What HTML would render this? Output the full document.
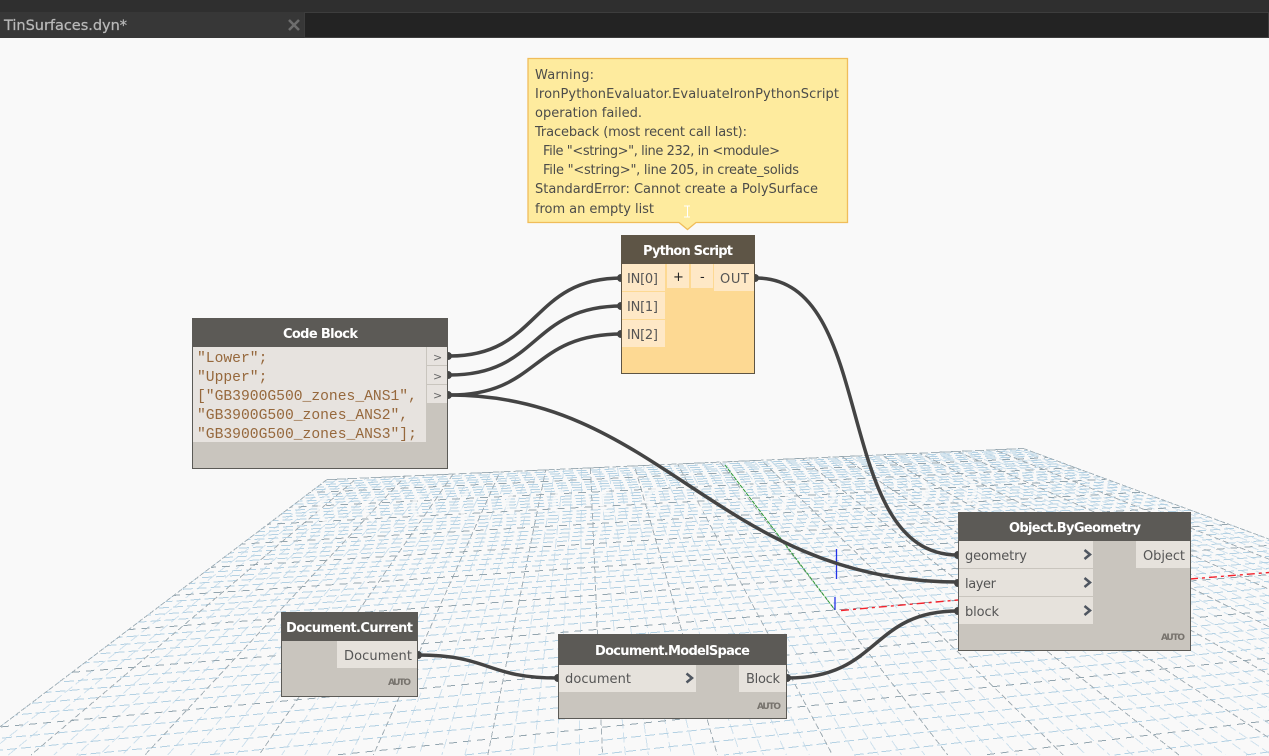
<!DOCTYPE html>
<html><head><meta charset="utf-8"><title>TinSurfaces.dyn</title>
<style>
html,body{margin:0;padding:0;width:1269px;height:756px;background:#f9f9f9;overflow:hidden}
svg{display:block;overflow:hidden}
text{font-family:"DejaVu Sans","Liberation Sans",sans-serif;font-size:13px;fill:#555}
.t{fill:#4c4c4a}
.h{font-weight:bold;fill:#fff;font-size:13px}
.a{font-weight:bold;font-size:9px;fill:#77736d}
.c{font-family:"Liberation Mono",monospace;font-size:14.67px;fill:#96683c}
</style></head><body>
<svg xmlns="http://www.w3.org/2000/svg" width="1269" height="756" viewBox="0 0 1269 756">
<rect x="0" y="38" width="1269" height="718" fill="#f9f9f9"/>
<g id="grid"></g>
<!-- axes -->
<path d="M725 465L835 610" stroke="#2f9a35" stroke-width="1" stroke-dasharray="4 1" fill="none"/>
<path d="M841 610.500L958 600M1190 579L1269 572.500" stroke="#f4222c" stroke-width="1.400" stroke-dasharray="8 4 3 4" fill="none"/>
<path d="M836.500 549V579M835 597V610" stroke="#2233e8" stroke-width="1.300" fill="none"/>
<!-- wires -->
<g fill="none" stroke="#444" stroke-width="3.500">
<path d="M450 356C540 356 530 278 622 278"/>
<path d="M450 375C540 375 530 306 622 306"/>
<path d="M450 395C540 395 530 334 622 334"/>
<path d="M756 278C880 278 830 555 958 555"/>
<path d="M450 395C660 395 720 582 958 582"/>
<path d="M418 655C490 655 486 678 558 678"/>
<path d="M788 678C880 678 870 611 958 611"/>
</g>
<!-- tab bar -->
<rect x="0" y="0" width="1269" height="12" fill="#2f2f2f"/>
<rect x="0" y="12" width="1269" height="26" fill="#373737"/>
<rect x="304.500" y="12.500" width="964" height="25" fill="#232323" stroke="#3d3d3d"/>
<text x="4" y="30" textLength="123" style="font-size:14.500px;fill:#b8b8b8;stroke:#b8b8b8;stroke-width:.25px">TinSurfaces.dyn*</text>
<path d="M289 20L299 30M299 20L289 30" stroke="#6e6e6e" stroke-width="2.600" fill="none"/>
<!-- tooltip -->
<path d="M528 58.500H847.500V222.500H696L687.500 229.500L679 222.500H528Z" fill="#feeb9e" stroke="#f0bd5a" stroke-width="1.300"/>
<g class="tip">
<text class="t" x="535" y="79" textLength="59">Warning:</text>
<text class="t" x="535" y="98" textLength="304">IronPythonEvaluator.EvaluateIronPythonScript</text>
<text class="t" x="535" y="117" textLength="107">operation failed.</text>
<text class="t" x="535" y="136" textLength="212">Traceback (most recent call last):</text>
<text class="t" x="543" y="155" textLength="237">File "&lt;string&gt;", line 232, in &lt;module&gt;</text>
<text class="t" x="543" y="174" textLength="256">File "&lt;string&gt;", line 205, in create_solids</text>
<text class="t" x="535" y="193" textLength="283">StandardError: Cannot create a PolySurface</text>
<text class="t" x="535" y="213" textLength="119">from an empty list</text>
</g>
<path d="M684 206H690M684 217H690M687.500 206V217" stroke="#fff" stroke-width="1" fill="none"/>
<!-- Python Script -->
<rect x="621.500" y="235.500" width="133" height="138" fill="#fdd993" stroke="#5e5544"/>
<rect x="621" y="235" width="134" height="29" fill="#5e5546"/>
<rect x="622" y="264" width="43" height="27" fill="#fee8c6"/>
<rect x="622" y="292" width="43" height="27" fill="#fee8c6"/>
<rect x="622" y="320" width="43" height="27" fill="#fee8c6"/>
<rect x="667" y="264" width="22" height="24" fill="#fee8c6"/>
<rect x="691" y="264" width="22" height="24" fill="#fee8c6"/>
<rect x="714" y="264" width="40" height="27" fill="#fee8c6"/>
<text class="h" x="643" y="255" textLength="90">Python Script</text>
<text x="627" y="283" textLength="31">IN[0]</text>
<text x="627" y="311" textLength="31">IN[1]</text>
<text x="627" y="339" textLength="31">IN[2]</text>
<text x="720" y="283" textLength="29">OUT</text>
<text x="673" y="281" style="fill:#222">+</text>
<text x="700" y="281" style="fill:#222">-</text>
<!-- Code Block -->
<rect x="192.500" y="318.500" width="255" height="150" fill="#c9c5be" stroke="#5b5a56"/>
<rect x="192" y="318" width="256" height="29" fill="#5c5a56"/>
<rect x="193" y="347" width="233" height="95" fill="#e7e3df"/>
<rect x="427" y="347" width="20" height="18" fill="#e7e3df"/>
<rect x="427" y="366" width="20" height="18" fill="#e7e3df"/>
<rect x="427" y="385" width="20" height="18" fill="#e7e3df"/>
<text class="h" x="283" y="338" textLength="75">Code Block</text>
<text class="c" x="197" y="362">"Lower";</text>
<text class="c" x="197" y="381">"Upper";</text>
<text class="c" x="197" y="400">["GB3900G500_zones_ANS1",</text>
<text class="c" x="197" y="419">"GB3900G500_zones_ANS2",</text>
<text class="c" x="197" y="438">"GB3900G500_zones_ANS3"];</text>
<text x="433" y="361" style="font-size:11px;fill:#666">&gt;</text>
<text x="433" y="380" style="font-size:11px;fill:#666">&gt;</text>
<text x="433" y="399" style="font-size:11px;fill:#666">&gt;</text>
<!-- Object.ByGeometry -->
<rect x="958.500" y="512.500" width="232" height="138" fill="#c9c5be" stroke="#5b5a56"/>
<rect x="958" y="512" width="233" height="29" fill="#5c5a56"/>
<rect x="959" y="541" width="134" height="27" fill="#e6e2dc"/>
<rect x="959" y="569" width="134" height="27" fill="#e6e2dc"/>
<rect x="959" y="597" width="134" height="27" fill="#e6e2dc"/>
<rect x="1136" y="541" width="54" height="27" fill="#e6e2dc"/>
<text class="h" x="1009" y="532" textLength="132">Object.ByGeometry</text>
<text x="965" y="560" textLength="62">geometry</text>
<text x="965" y="588" textLength="31">layer</text>
<text x="965" y="616" textLength="34">block</text>
<text x="1143" y="560" textLength="42">Object</text>
<text class="a" x="1161" y="640" textLength="24">AUTO</text>
<path d="M1084.500 550L1090 554.500L1084.500 559M1084.500 578L1090 582.500L1084.500 587M1084.500 606L1090 610.500L1084.500 615" stroke="#4f5660" stroke-width="2.500" fill="none"/>
<!-- Document.Current -->
<rect x="281.500" y="612.500" width="136" height="84" fill="#c9c5be" stroke="#5b5a56"/>
<rect x="281" y="612" width="137" height="29" fill="#5c5a56"/>
<rect x="337" y="641" width="80" height="27" fill="#e6e2dc"/>
<text class="h" x="286" y="632" textLength="127">Document.Current</text>
<text x="344" y="660" textLength="68">Document</text>
<text class="a" x="388" y="685" textLength="23">AUTO</text>
<!-- Document.ModelSpace -->
<rect x="558.500" y="634.500" width="228" height="84" fill="#c9c5be" stroke="#5b5a56"/>
<rect x="558" y="634" width="229" height="31" fill="#5c5a56"/>
<rect x="559" y="665" width="137" height="27" fill="#e6e2dc"/>
<rect x="739" y="665" width="47" height="27" fill="#e6e2dc"/>
<text class="h" x="595" y="655" textLength="155">Document.ModelSpace</text>
<text x="565" y="683" textLength="66">document</text>
<text x="746" y="683" textLength="34">Block</text>
<text class="a" x="757" y="709" textLength="24">AUTO</text>
<path d="M686.500 673.500L692 678L686.500 682.500" stroke="#4f5660" stroke-width="2.500" fill="none"/>
<!-- port dots -->
<g fill="#444">
<path d="M448 352a4 4 0 0 1 0 8ZM448 371a4 4 0 0 1 0 8ZM448 391a4 4 0 0 1 0 8Z"/>
<path d="M621 274a4 4 0 0 0 0 8ZM621 302a4 4 0 0 0 0 8ZM621 330a4 4 0 0 0 0 8Z"/>
<path d="M755 274a4 4 0 0 1 0 8Z"/>
<path d="M958 551a4 4 0 0 0 0 8ZM958 579a4 4 0 0 0 0 8ZM958 607a4 4 0 0 0 0 8Z"/>
<path d="M418 651a4 4 0 0 1 0 8Z"/>
<path d="M558 674a4 4 0 0 0 0 8Z"/>
<path d="M787 674a4 4 0 0 1 0 8Z"/>
</g>
</svg>
<script>
(function(){
var O=[835,610],V2=[5000,270],V1=[583,286];
function P(a,b){var w=1+a+b;return [(O[0]+a*V2[0]+b*V1[0])/w,(O[1]+a*V2[1]+b*V1[1])/w];}
var s='',i,j,A0=-.1548,A1=.1404,B0=-.5,B1=.8400;
function clip(p,q){
 var t0=0,t1=1,dx=q[0]-p[0],dy=q[1]-p[1],c=[[-dx,p[0]-0],[dx,1269-p[0]],[-dy,p[1]-38],[dy,755-p[1]]];
 for(var k=0;k<4;k++){var u=c[k][0],v=c[k][1];
  if(u==0){if(v<0)return null;}
  else{var r=v/u;if(u<0){if(r>t0)t0=r;}else{if(r<t1)t1=r;}}}
 if(t0>=t1)return null;
 return [[p[0]+dx*t0,p[1]+dy*t0],[p[0]+dx*t1,p[1]+dy*t1]];
}
function L(p,q,c,d,o){var r=clip(p,q);if(!r)return;s+='<path d="M'+r[0][0].toFixed(1)+' '+r[0][1].toFixed(1)+'L'+r[1][0].toFixed(1)+' '+r[1][1].toFixed(1)+'" stroke="'+c+'" stroke-dasharray="'+d+'" stroke-dashoffset="'+o+'"/>';}
for(i=-43;i<=39;i++){var a=.0036*i;if(i%5==0)continue;L(P(a,B1),P(a,B0),'#cfe1ed','10 4',(i*7)%14+14);}
for(j=-24;j<=40;j++){var b=.021*j;if(j%5==0)continue;L(P(A0,b),P(A1,b),'#b4d1e3','10 4',(j*5)%14+14);}
for(i=-40;i<=35;i+=5){var a=.0036*i;L(P(a,B1),P(a,B0),'#a3afb6','6 3',(i*3)%9+9);}
for(j=-20;j<=40;j+=5){var b=.021*j;L(P(A0,b),P(A1,b),'#93a5af','8 6',(j*3)%14+14);}
L(P(A0,B1),P(A0,B0),'#a4b2ba','5 2',0);
L(P(A1,B1),P(A1,B0),'#a4b2ba','5 2',0);
L(P(A0,B1),P(A1,B1),'#a4b2ba','8 3',0);
var g=document.getElementById('grid');g.setAttribute('fill','none');g.setAttribute('stroke-width','1');g.setAttribute('shape-rendering','crispEdges');
var x,y,m='';
for(x=318;x<=1000;x+=47){y=510-(x-318)*.03;var f=x<760?-1:1;
m+='<path d="M'+(x-f*9)+' '+(y-13)+'Q'+(x+f*7)+' '+y+' '+(x-f*9)+' '+(y+13)+'" stroke="#fafafa" stroke-width="4" opacity=".75" shape-rendering="auto"/>';}
g.innerHTML=s+m;
})();
</script>
</body></html>
